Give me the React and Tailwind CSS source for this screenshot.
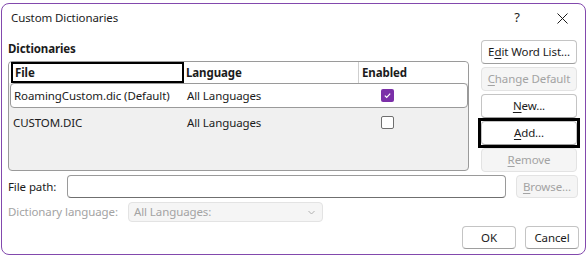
import React from "react";

// Custom Dictionaries dialog (Windows 11 style)

const FONT = { fontFamily: '"Noto Sans", "Open Sans", sans-serif' };

const Btn = ({ children, disabled, focused, className = "" }) => (
  <div className={"relative " + className}>
    <div
      className={
        "flex h-full w-full items-center justify-center rounded-[4px] border " +
        (disabled
          ? "border-[#e3e3e3] bg-[#f5f5f5] text-[#a3a3a3]"
          : "border-[#c4c4c4] border-b-[#9e9e9e] bg-white text-[#1b1b1b]")
      }
    >
      {children}
    </div>
    {focused && <div className="absolute -inset-[3px] border-[3px] border-black" />}
  </div>
);

const U = ({ children }) => <span className="underline underline-offset-2">{children}</span>;

const Checkbox = ({ checked }) =>
  checked ? (
    <div className="flex h-[13px] w-[13px] items-center justify-center rounded-[2px] bg-[#7b2fa8]">
      <svg width="9" height="9" viewBox="0 0 9 9">
        <path d="M1.8 4.6 L3.7 6.3 L7.2 2.6" fill="none" stroke="white" strokeWidth="1.2" />
      </svg>
    </div>
  ) : (
    <div className="h-[13px] w-[13px] rounded-[2px] border border-[#6f6f6f] bg-white" />
  );

export default function App() {
  return (
    <div
      className="h-[259px] w-[588px] bg-white pb-[4px] pl-[1px] pr-[2px] pt-[3px] text-[11.5px] tracking-[-0.1px]"
      style={FONT}
    >
      <div className="flex h-full flex-col rounded-[8px] border border-[#8249ad] bg-white">
        {/* title bar */}
        <div className="flex h-[28px] items-center pl-[9px] text-[#1b1b1b]">
          <span className="flex-1">Custom Dictionaries</span>
          <span className="w-[46px] pl-[2px] text-center text-[13px]">?</span>
          <div className="flex w-[46px] items-center justify-center">
            <svg width="11" height="11" viewBox="0 0 11 11">
              <path d="M0.5 0.5 L10.5 10.5 M10.5 0.5 L0.5 10.5" stroke="#1b1b1b" strokeWidth="1" />
            </svg>
          </div>
        </div>

        <div className="flex flex-1 flex-col pl-[6px] pr-[6px] text-[#1b1b1b]">
          {/* list + side buttons */}
          <div className="flex">
            <div className="flex w-[461px] flex-col">
              <div className="mt-[9px] h-[16px] font-bold leading-[16px]">Dictionaries</div>
              <div className="mt-[4px] flex h-[110px] flex-col rounded-[4px] border border-[#9a9a9a] bg-[#f0f0f0]">
                <div className="flex h-[21px] shrink-0 rounded-t-[4px] bg-white font-bold">
                  <div className="ml-[2px] flex w-[173px] items-center border-2 border-black pl-[2px]">File</div>
                  <div className="flex w-[175px] items-center border-r border-[#cfcfcf] pl-[2px]">Language</div>
                  <div className="flex flex-1 items-center pl-[3px]">Enabled</div>
                </div>
                <div className="ml-[1px] flex h-[25px] items-center rounded-[4px] border border-[#9a9a9a] bg-white">
                  <div className="w-[176px] pl-[3px]">RoamingCustom.dic (Default)</div>
                  <div className="w-[194px]">All Languages</div>
                  <Checkbox checked />
                </div>
                <div className="ml-[1px] mt-[2px] flex h-[25px] items-center">
                  <div className="w-[177px] pl-[3px]">CUSTOM.DIC</div>
                  <div className="w-[194px]">All Languages</div>
                  <Checkbox />
                </div>
              </div>
            </div>
            <div className="ml-[12px] mt-[8px] flex w-[96px] flex-col gap-[3px]">
              <Btn className="h-[24px]">
                <span>
                  E<U>d</U>it Word List...
                </span>
              </Btn>
              <Btn className="h-[24px]" disabled>
                <span>
                  <U>C</U>hange Default
                </span>
              </Btn>
              <Btn className="h-[24px]">
                <span>
                  <U>N</U>ew...
                </span>
              </Btn>
              <Btn className="h-[24px]" focused>
                <span>
                  <U>A</U>dd...
                </span>
              </Btn>
              <Btn className="h-[24px]" disabled>
                <span>
                  <U>R</U>emove
                </span>
              </Btn>
            </div>
          </div>

          {/* file path */}
          <div className="mt-[3px] flex h-[23px] items-center">
            <div className="w-[59px]">File path:</div>
            <div className="h-full w-[439px] rounded-[4px] border border-[#9a9a9a] border-b-[#6f6f6f] bg-white" />
            <Btn className="ml-[10px] h-full w-[62px]" disabled>
              <span>
                <U>B</U>rowse...
              </span>
            </Btn>
          </div>

          {/* dictionary language */}
          <div className="mt-[4px] flex h-[20px] items-center text-[#a3a3a3]">
            <div className="w-[120px]">Dictionary language:</div>
            <div className="flex h-full w-[195px] items-center justify-between rounded-[4px] border border-[#e3e3e3] bg-[#f5f5f5] pl-[5px] pr-[7px]">
              <span>All Languages:</span>
              <svg width="7" height="5" viewBox="0 0 7 5">
                <path d="M0.5 1 L3.5 4 L6.5 1" fill="none" stroke="#b0b0b0" strokeWidth="1" />
              </svg>
            </div>
          </div>

          {/* OK / Cancel */}
          <div className="mt-[4px] flex justify-end gap-[9px]">
            <Btn className="h-[23px] w-[54px]">OK</Btn>
            <Btn className="h-[23px] w-[54px]">Cancel</Btn>
          </div>
        </div>
      </div>
    </div>
  );
}
